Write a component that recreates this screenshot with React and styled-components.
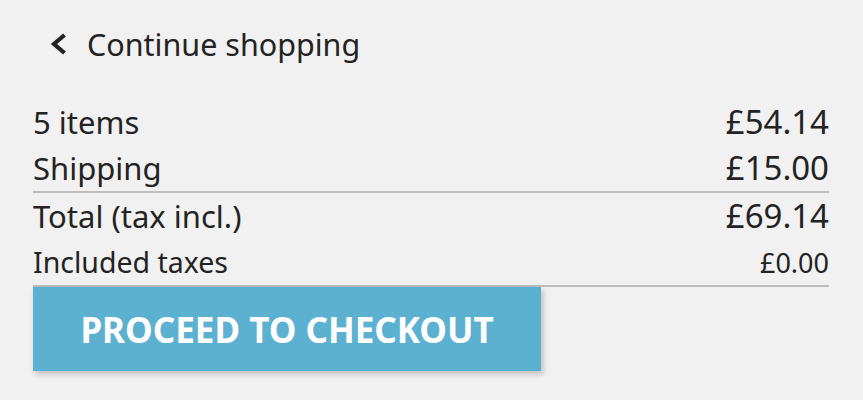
import React from 'react'
import styled, { createGlobalStyle } from 'styled-components'

const GlobalStyle = createGlobalStyle`
    html, body {
        margin: 0;
        padding: 0;
        background: #f1f1f1;
    }
    body {
        font-family: "Noto Sans", "Open Sans", sans-serif;
        color: #232323;
    }
`

const Page = styled.div`
    width: 863px;
    height: 400px;
    box-sizing: border-box;
    padding: 21px 34px 0 33px;
`

const BackLink = styled.a`
    display: flex;
    align-items: center;
    gap: 20px;
    margin-left: 17px;
    font-size: 30.5px;
    line-height: 46px;
    color: #232323;
    text-decoration: none;
    cursor: pointer;
`

const Chevron = styled.svg`
    width: 17px;
    height: 24px;
    flex-shrink: 0;
`

const Summary = styled.div`
    margin-top: 32px;
`

const Line = styled.div`
    display: flex;
    justify-content: space-between;
    align-items: baseline;
    height: 46px;
    font-size: ${(p) => (p.$small ? 28.5 : 31)}px;
    line-height: 46px;
    border-bottom: ${(p) => (p.$divider ? '2px solid #bdbdbd' : 'none')};
`

const Label = styled.span``

const Amount = styled.span`
    font-size: ${(p) => (p.$small ? 27 : 33)}px;
`

const CheckoutButton = styled.button`
    display: block;
    width: 508px;
    height: 84px;
    padding: 0;
    border: none;
    background: #5cb1d0;
    color: #ffffff;
    font-family: "Noto Sans", "Open Sans", sans-serif;
    font-weight: 700;
    font-size: 35px;
    text-transform: uppercase;
    box-shadow: 2px 3px 6px rgba(0, 0, 0, 0.22);
    cursor: pointer;
`

const rows = [
    { label: '5 items', amount: '£54.14' },
    { label: 'Shipping', amount: '£15.00', divider: true },
    { label: 'Total (tax incl.)', amount: '£69.14' },
    { label: 'Included taxes', amount: '£0.00', small: true, divider: true },
]

export default function App() {
    return (
        <Page>
            <GlobalStyle />
            <BackLink>
                <Chevron viewBox="0 0 17 24">
                    <path d="M14.5 3 L4 12 L14.5 21" fill="none" stroke="#232323" strokeWidth="4.2" />
                </Chevron>
                Continue shopping
            </BackLink>
            <Summary>
                {rows.map((r) => (
                    <Line key={r.label} $divider={r.divider} $small={r.small}>
                        <Label>{r.label}</Label>
                        <Amount $small={r.small}>{r.amount}</Amount>
                    </Line>
                ))}
            </Summary>
            <CheckoutButton>Proceed to checkout</CheckoutButton>
        </Page>
    )
}
